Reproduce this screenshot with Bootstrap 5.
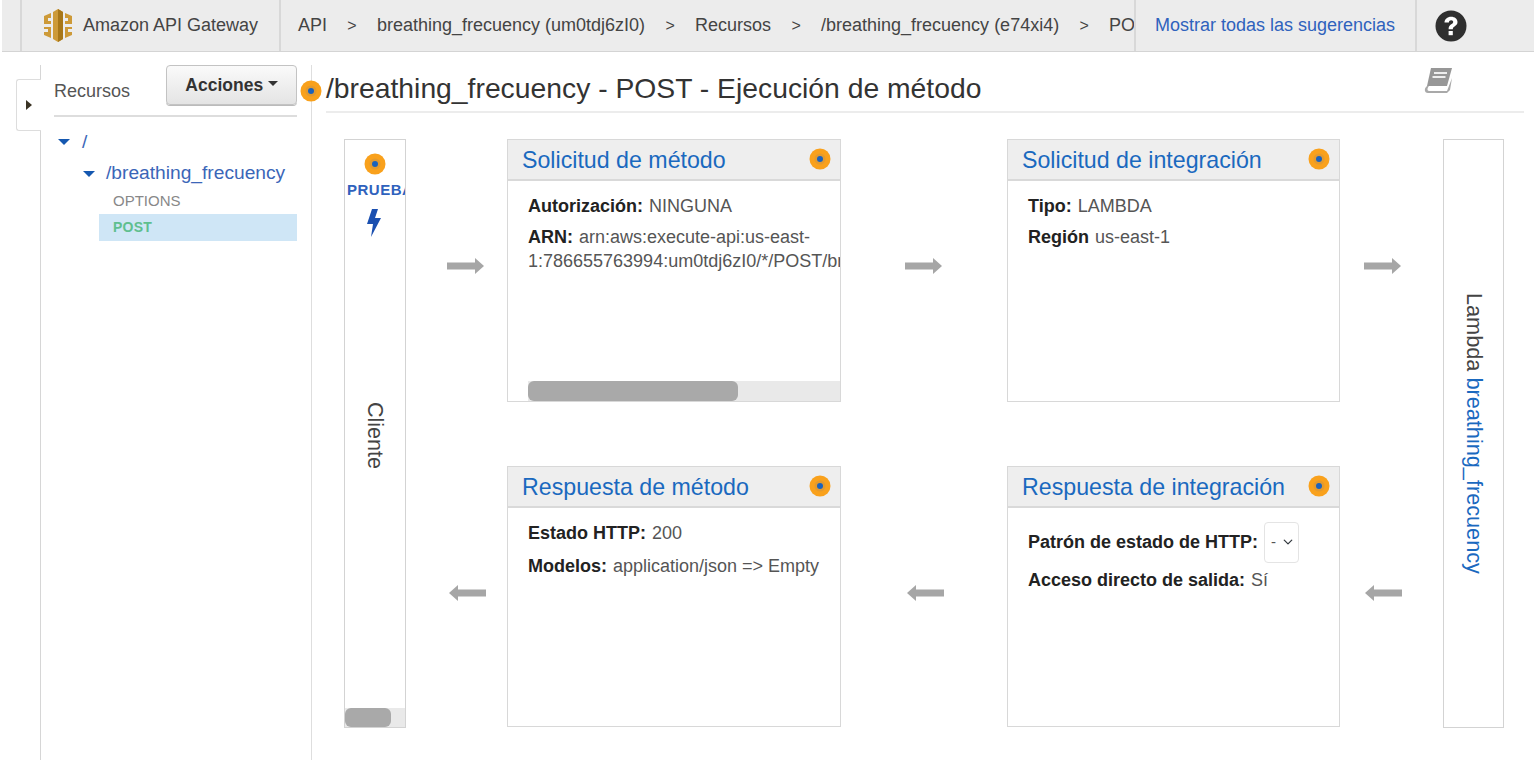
<!DOCTYPE html>
<html lang="es">
<head>
<meta charset="utf-8">
<title>Amazon API Gateway</title>
<link rel="stylesheet" href="https://cdn.jsdelivr.net/npm/bootstrap@5.3.0/dist/css/bootstrap.min.css">
<style>
html,body{height:100%;overflow:hidden}
body{font-family:"Liberation Sans",Arial,sans-serif;font-size:18px;color:#333;background:#fff}
.gw-top{height:52px;margin:0 1px 0 2px;background:#ececec;border-bottom:1px solid #d4d4d4;padding-left:18px;color:#444}
.gw-cell{height:100%;border-left:2px solid #d8d8d8}
.gw-brand{width:259px;padding-left:21px;gap:10px}
.gw-crumbs{width:855px;padding-left:17px;gap:20.3px;white-space:nowrap;overflow:hidden}
.gw-crumbs i{font-style:normal;font-size:16px}
.gw-tips{width:281px;padding-left:19px;color:#2f62bd}
.gw-help{padding-left:18px}
.gw-body{height:708px}
.gw-tabwrap{width:40px;flex:none;padding:27px 0 0 16px}
.gw-tab{width:25px;height:52px;border:1px solid #ddd;border-right:0;border-radius:3px 0 0 3px;background:#fff;margin-right:-1px;position:relative;z-index:1}
.gw-side{width:272px;flex:none;border-left:1px solid #d6d6d6;border-right:1px solid #dedede;margin-top:13px;padding:0 14px 0 13px;position:relative}
.gw-sidehead{height:52px;border-bottom:2px solid #ddd;color:#555}
.gw-sidelabel{margin-top:13px}
.gw-actions{width:131px;height:40px;padding:0;border:1px solid #c3c3c3;border-radius:4px;background:linear-gradient(#fafafa,#e4e4e4);font-size:17.5px;font-weight:700;color:#333;box-shadow:0 1px 0 #bbb}
.gw-actions:hover{background:#eee;border-color:#c3c3c3;color:#333}
.gw-hdot{position:absolute;right:-11px;top:15px}
.gw-tree{padding:13px 0 0 4px;list-style:none;margin:0;color:#3b66b8;font-size:19.2px}
.gw-tree li{display:flex;align-items:center}
.gw-caret{width:0;height:0;border:6px solid transparent;border-top:6px solid #1558b0;border-bottom:0;margin-right:12px}
.gw-root{height:24px}
.gw-tree .gw-res{height:34px;padding:5px 0 0 25px}
.gw-res .gw-caret{margin-right:11px}
.gw-tree .gw-meth{height:26px;margin-left:41px;padding-left:14px;font-size:15px;color:#888}
.gw-tree .gw-on{height:27px;background:#cfe6f6;color:#5fbf8f;font-weight:700;font-size:14px;letter-spacing:.2px}
.gw-main{flex:1;min-width:0;margin-right:11px;padding:13px 0 0 14px}
.gw-title{height:48px;border-bottom:2px solid #ececec;margin:0;padding-top:9px;font-size:28.3px;font-weight:400;color:#333;line-height:28px}
.gw-diagram{display:grid;grid-template-columns:62px 101px 334px 166px 333px 103px 61px;grid-template-rows:263px 64px 262px;margin:26px 0 0 18px}
.gw-col{grid-row:1/4;border:1px solid #d3d3d3;position:relative;overflow:hidden}
.gw-client{grid-column:1;font-size:21.5px;color:#444}
.gw-clientdot{margin-top:13px;flex:none}
.gw-clientname{margin-top:164px}
.gw-lambda{grid-column:7;font-size:21.7px;color:#444}
.gw-vert{writing-mode:vertical-rl;white-space:nowrap}
.gw-test{color:#2f62bd;font-size:15px;font-weight:700;letter-spacing:.5px;line-height:16px;margin-left:3px;white-space:nowrap;margin-top:7px;width:59px}
.gw-bolt{margin:10px 2px 0 0;flex:none}
.gw-box{border:1px solid #d8d8d8;display:flex;flex-direction:column;overflow:hidden;min-width:0;position:relative}
.gw-boxhead{height:41px;flex:none;background:#eee;border-bottom:2px solid #d9d9d9;padding:0 9px 2px 14px;font-size:23.2px;color:#1a69bf}
.gw-boxhead span{padding-top:3px}
.gw-boxbody{padding:13px 0 0 20px;font-size:18px;line-height:24px;color:#555}
.gw-boxbody b{color:#222;margin-right:1px}
.gw-boxbody p{margin:0 0 7px}
.gw-arn{white-space:nowrap}
.gw-row3a,.gw-row3b{grid-row:3;margin-bottom:1px}
.gw-row3a{grid-column:3}
.gw-row3b{grid-column:5}
.gw-row3a .gw-boxbody p{margin-bottom:9px}
.gw-arrow{align-self:start}
.gw-up{margin-top:119px}
.gw-down{margin-top:119px}
.gw-u1{margin-left:41px}
.gw-u2{margin-left:64px}
.gw-u3{margin-left:24px}
.gw-a1{grid-column:2;grid-row:3;margin-left:43px}
.gw-a2{grid-column:4;grid-row:3;margin-left:66px}
.gw-a3{grid-column:6;grid-row:3;margin-left:25px}
.gw-track{position:absolute;left:20px;right:0;bottom:0;height:20px;background:#e9e9e9}
.gw-thumb{height:100%;width:210px;background:#a9a9a9;border-radius:6px}
.gw-track2{left:0;height:19px}
.gw-thumb2{width:46px}
.gw-pick{width:35px;height:41px;flex:none;padding:0 0 0 6px;margin-left:5px;font-size:15px;color:#555;background-position:right 4px center;background-size:12px 10px;border-radius:4px;border-color:#e4e4e4}
.gw-patron{margin:-1px 0 4px;display:flex;align-items:center;height:44px;white-space:nowrap}
.gw-link{color:#1a69bf}
.gw-book{margin:-6px 72px 0 0;flex:none}
</style>
</head>
<body>
<header class="gw-top d-flex align-items-center">
  <div class="gw-cell gw-brand d-flex align-items-center">
    <svg width="30" height="33" viewBox="0 0 30 33" aria-hidden="true"><g fill="#cd9a38"><path d="M10 3l5-3 5 3v27l-5 3-5-3z"/><path d="M1 7l7-3v5H5v3h3v3H1zM29 7l-7-3v5h3v3h-3v3h7zM1 18h7v11l-7-3v-3h4v-3H1zM29 18h-7v11l7-3v-3h-4v-3h4z"/></g><path d="M15 0l5 3v27l-5 3z" fill="#a87718"/></svg>
    <span>Amazon API Gateway</span>
  </div>
  <nav class="gw-cell gw-crumbs d-flex align-items-center">
    <span>API</span><i>&gt;</i><span>breathing_frecuency (um0tdj6zI0)</span><i>&gt;</i><span>Recursos</span><i>&gt;</i><span>/breathing_frecuency (e74xi4)</span><i>&gt;</i><span>POST</span>
  </nav>
  <div class="gw-cell gw-tips d-flex align-items-center">Mostrar todas las sugerencias</div>
  <div class="gw-cell gw-help d-flex align-items-center">
    <svg width="32" height="32" viewBox="0 0 32 32" aria-hidden="true"><circle cx="16" cy="16" r="15.500" fill="#2f2f2f"/><path d="M9.500 12.500c0-3.300 2.800-5.800 6.600-5.800 3.800 0 6.400 2.200 6.400 5.300 0 4.300-4.700 4-4.700 7.200h-4.200c0-5 4.600-4.800 4.600-7.100 0-1.100-.8-1.800-2-1.800-1.300 0-2.200.9-2.300 2.200z" fill="#fff"/><rect x="13.600" y="21" width="4.200" height="4.200" fill="#fff"/></svg>
  </div>
</header>
<div class="gw-body d-flex">
  <div class="gw-tabwrap">
    <div class="gw-tab d-flex align-items-center justify-content-center">
      <svg width="6" height="10" viewBox="0 0 6 10" aria-hidden="true"><path d="M0 0l6 5-6 5z" fill="#3a3324"/></svg>
    </div>
  </div>
  <aside class="gw-side">
    <div class="gw-sidehead d-flex justify-content-between align-items-start">
      <span class="gw-sidelabel">Recursos</span>
      <button type="button" class="btn gw-actions dropdown-toggle">Acciones</button>
    </div>
    <ul class="gw-tree">
      <li class="gw-root"><span class="gw-caret"></span>/</li>
      <li class="gw-res"><span class="gw-caret"></span>/breathing_frecuency</li>
      <li class="gw-meth">OPTIONS</li>
      <li class="gw-meth gw-on">POST</li>
    </ul>
    <svg class="gw-hdot" width="22" height="22" viewBox="0 0 22 22" aria-hidden="true"><circle cx="11" cy="11" r="10.500" fill="#f9a11c"/><circle cx="11" cy="11" r="5.500" fill="#e39a2e"/><circle cx="11" cy="11" r="3" fill="#1a62bd"/></svg>
  </aside>
  <main class="gw-main">
    <div class="gw-title d-flex justify-content-between">
      <span>/breathing_frecuency - POST - Ejecución de método</span>
      <svg class="gw-book" width="28" height="25" viewBox="0 0 28 25" aria-hidden="true"><path d="M7 0h21l-5 18H3z" fill="#979797"/><path d="M3 18c-3 2-3 7 1 7h19l3-3 2-12-5 13H5c-2 0-2-3 0-5z" fill="#a9a9a9"/><path d="M10 5h13M8.500 9h13" stroke="#eee" stroke-width="2"/></svg>
    </div>
    <div class="gw-diagram">
      <section class="gw-col gw-client d-flex flex-column align-items-center">
        <svg class="gw-clientdot" width="22" height="22" viewBox="0 0 22 22" aria-hidden="true"><circle cx="11" cy="11" r="10.500" fill="#f9a11c"/><circle cx="11" cy="11" r="5.500" fill="#e39a2e"/><circle cx="11" cy="11" r="3" fill="#1a62bd"/></svg>
        <div class="gw-test">PRUEBA</div>
        <svg class="gw-bolt" width="16" height="30" viewBox="0 0 16 28" aria-hidden="true"><path d="M6 0h6L9 9h6L5 28l2-13H1z" fill="#1a4fb0"/></svg>
        <span class="gw-vert gw-clientname">Cliente</span>
        <div class="gw-track gw-track2"><div class="gw-thumb gw-thumb2"></div></div>
      </section>
      <svg class="gw-arrow gw-up gw-u1" width="37" height="16" viewBox="0 0 37 16" aria-hidden="true"><path d="M0 4.500h28V0l9 8-9 8v-4.500H0z" fill="#a6a6a6"/></svg>
      <article class="gw-box">
        <div class="gw-boxhead d-flex justify-content-between align-items-center"><span>Solicitud de método</span><svg width="22" height="22" viewBox="0 0 22 22" aria-hidden="true"><circle cx="11" cy="11" r="10.500" fill="#f9a11c"/><circle cx="11" cy="11" r="5.500" fill="#e39a2e"/><circle cx="11" cy="11" r="3" fill="#1a62bd"/></svg></div>
        <div class="gw-boxbody">
          <p><b>Autorización:</b> NINGUNA</p>
          <p class="gw-arn"><b>ARN:</b> arn:aws:execute-api:us-east-<br>1:786655763994:um0tdj6zI0/*/POST/breathing_frecuency</p>
        </div>
        <div class="gw-track"><div class="gw-thumb"></div></div>
      </article>
      <svg class="gw-arrow gw-up gw-u2" width="37" height="16" viewBox="0 0 37 16" aria-hidden="true"><path d="M0 4.500h28V0l9 8-9 8v-4.500H0z" fill="#a6a6a6"/></svg>
      <article class="gw-box">
        <div class="gw-boxhead d-flex justify-content-between align-items-center"><span>Solicitud de integración</span><svg width="22" height="22" viewBox="0 0 22 22" aria-hidden="true"><circle cx="11" cy="11" r="10.500" fill="#f9a11c"/><circle cx="11" cy="11" r="5.500" fill="#e39a2e"/><circle cx="11" cy="11" r="3" fill="#1a62bd"/></svg></div>
        <div class="gw-boxbody">
          <p><b>Tipo:</b> LAMBDA</p>
          <p><b>Región</b> us-east-1</p>
        </div>
      </article>
      <svg class="gw-arrow gw-up gw-u3" width="37" height="16" viewBox="0 0 37 16" aria-hidden="true"><path d="M0 4.500h28V0l9 8-9 8v-4.500H0z" fill="#a6a6a6"/></svg>
      <section class="gw-col gw-lambda d-flex align-items-center justify-content-center">
        <span class="gw-vert">Lambda <span class="gw-link">breathing_frecuency</span></span>
      </section>
      <article class="gw-box gw-row3a">
        <div class="gw-boxhead d-flex justify-content-between align-items-center"><span>Respuesta de método</span><svg width="22" height="22" viewBox="0 0 22 22" aria-hidden="true"><circle cx="11" cy="11" r="10.500" fill="#f9a11c"/><circle cx="11" cy="11" r="5.500" fill="#e39a2e"/><circle cx="11" cy="11" r="3" fill="#1a62bd"/></svg></div>
        <div class="gw-boxbody">
          <p><b>Estado HTTP:</b> 200</p>
          <p><b>Modelos:</b> application/json =&gt; Empty</p>
        </div>
      </article>
      <article class="gw-box gw-row3b">
        <div class="gw-boxhead d-flex justify-content-between align-items-center"><span>Respuesta de integración</span><svg width="22" height="22" viewBox="0 0 22 22" aria-hidden="true"><circle cx="11" cy="11" r="10.500" fill="#f9a11c"/><circle cx="11" cy="11" r="5.500" fill="#e39a2e"/><circle cx="11" cy="11" r="3" fill="#1a62bd"/></svg></div>
        <div class="gw-boxbody">
          <div class="gw-patron"><b>Patrón de estado de HTTP:</b> <select class="form-select gw-pick" aria-label="Patrón"><option>-</option></select></div>
          <p><b>Acceso directo de salida:</b> Sí</p>
        </div>
      </article>
      <svg class="gw-arrow gw-down gw-a1" width="37" height="16" viewBox="0 0 37 16" aria-hidden="true"><path d="M37 4.500H9V0L0 8l9 8v-4.500h28z" fill="#a6a6a6"/></svg>
      <svg class="gw-arrow gw-down gw-a2" width="37" height="16" viewBox="0 0 37 16" aria-hidden="true"><path d="M37 4.500H9V0L0 8l9 8v-4.500h28z" fill="#a6a6a6"/></svg>
      <svg class="gw-arrow gw-down gw-a3" width="37" height="16" viewBox="0 0 37 16" aria-hidden="true"><path d="M37 4.500H9V0L0 8l9 8v-4.500h28z" fill="#a6a6a6"/></svg>
    </div>
  </main>
</div>
<script src="https://cdn.jsdelivr.net/npm/bootstrap@5.3.0/dist/js/bootstrap.bundle.min.js"></script>
</body>
</html>
